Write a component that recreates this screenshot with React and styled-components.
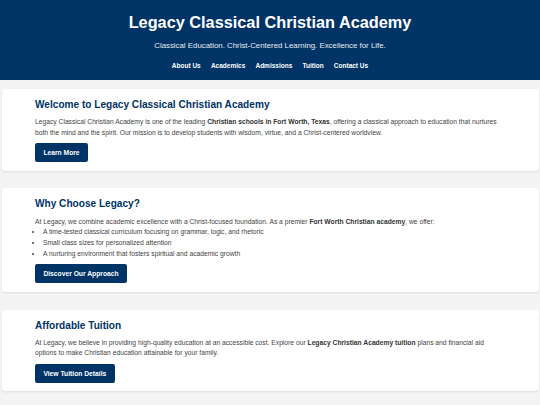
import React from "react";
import styled, { createGlobalStyle } from "styled-components";

const Global = createGlobalStyle`
  html, body { margin: 0; padding: 0; }
  body {
    background: #f4f4f4;
    font-family: "Liberation Sans", Arial, Helvetica, sans-serif;
    color: #333;
  }
  * { box-sizing: border-box; }
`;

const Header = styled.header`
  background: #003366;
  color: #fff;
  height: 80px;
  padding-top: 12.5px;
  text-align: center;
`;

const Title = styled.h1`
  margin: 0;
  font-size: 16.3px;
  line-height: 19px;
  font-weight: bold;
`;

const Tagline = styled.p`
  margin: 9.5px 0 0;
  font-size: 7.85px;
  line-height: 10px;
  color: #e8ebef;
`;

const Nav = styled.nav`
  margin-top: 11px;
  display: flex;
  justify-content: center;
  gap: 10.2px;
  font-size: 6.5px;
  line-height: 8px;
  font-weight: bold;
`;

const NavLink = styled.a`
  color: #fff;
  text-decoration: none;
`;

const Main = styled.main`
  padding: 9px 1.5px 14px;
  display: flex;
  flex-direction: column;
  gap: 17.5px;
`;

const Card = styled.section`
  background: #fff;
  border-radius: 3.4px;
  box-shadow: 0 1px 2.5px rgba(0, 0, 0, 0.1);
  padding: 10px 33.5px 8.7px;
`;

const Heading = styled.h2`
  margin: 0 0 6.3px;
  font-size: 10.1px;
  line-height: 12px;
  color: #003366;
  font-weight: bold;
`;

const Text = styled.p`
  margin: 0 0 ${(p) => (p.$tight ? 0 : 4.6)}px;
  font-size: 6.72px;
  line-height: 10.65px;
  color: #444;

  strong { color: #333; }
`;

const List = styled.ul`
  margin: 0 0 5px;
  padding-left: 8px;
  font-size: 6.72px;
  line-height: 10.65px;
  color: #444;
`;

const Button = styled.a`
  display: flex;
  width: fit-content;
  align-items: center;
  height: 19px;
  padding: 0 8.4px;
  background: #003366;
  color: #fff;
  border-radius: 2.1px;
  font-size: 6.72px;
  font-weight: bold;
  text-decoration: none;
`;

export default function App() {
  return (
    <>
      <Global />
      <Header>
        <Title>Legacy Classical Christian Academy</Title>
        <Tagline>Classical Education. Christ-Centered Learning. Excellence for Life.</Tagline>
        <Nav>
          <NavLink href="#">About Us</NavLink>
          <NavLink href="#">Academics</NavLink>
          <NavLink href="#">Admissions</NavLink>
          <NavLink href="#">Tuition</NavLink>
          <NavLink href="#">Contact Us</NavLink>
        </Nav>
      </Header>
      <Main>
        <Card>
          <Heading>Welcome to Legacy Classical Christian Academy</Heading>
          <Text>
            Legacy Classical Christian Academy is one of the leading{" "}
            <strong>Christian schools in Fort Worth, Texas</strong>, offering a classical approach to
            education that nurtures both the mind and the spirit. Our mission is to develop students
            with wisdom, virtue, and a Christ-centered worldview.
          </Text>
          <Button href="#">Learn More</Button>
        </Card>
        <Card>
          <Heading>Why Choose Legacy?</Heading>
          <Text $tight>
            At Legacy, we combine academic excellence with a Christ-focused foundation. As a premier{" "}
            <strong>Fort Worth Christian academy</strong>, we offer:
          </Text>
          <List>
            <li>A time-tested classical curriculum focusing on grammar, logic, and rhetoric</li>
            <li>Small class sizes for personalized attention</li>
            <li>A nurturing environment that fosters spiritual and academic growth</li>
          </List>
          <Button href="#">Discover Our Approach</Button>
        </Card>
        <Card>
          <Heading>Affordable Tuition</Heading>
          <Text>
            At Legacy, we believe in providing high-quality education at an accessible cost. Explore
            our <strong>Legacy Christian Academy tuition</strong> plans and financial aid options to
            make Christian education attainable for your family.
          </Text>
          <Button href="#">View Tuition Details</Button>
        </Card>
      </Main>
    </>
  );
}
